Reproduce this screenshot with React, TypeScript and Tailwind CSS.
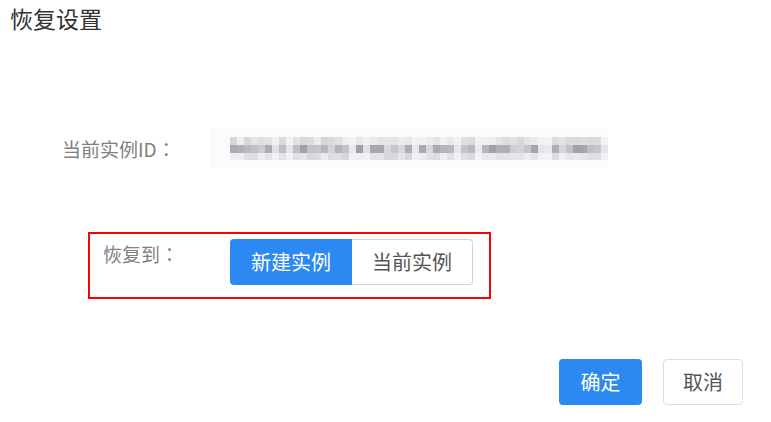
const mosaicCols = 54;

// pseudo-random shades for the masked instance id
const shade = (i: number, row: number) => {
  const n = Math.abs(Math.sin(i * 12.9898 + row * 78.233) * 43758.5453) % 1;
  const gap = i % 9 === 8 || i % 13 === 6;
  if (row === 1) {
    const v = gap ? 222 + n * 15 : 160 + n * 60;
    return `rgb(${v - 3}, ${v}, ${v + 6})`;
  }
  const v = gap ? 242 : 214 + n * 26;
  return `rgb(${v}, ${v}, ${v + 4})`;
};

const MaskedId: React.FC = () => (
  <div className="flex flex-col">
    {[8, 8, 7].map((h, row) => (
      <div key={row} className="flex">
        {Array.from({ length: mosaicCols }).map((_, i) => (
          <div
            key={i}
            className="w-[7px]"
            style={{ height: h, backgroundColor: shade(i, row) }}
          />
        ))}
      </div>
    ))}
  </div>
);

const Colon: React.FC = () => (
  <span style={{ fontFamily: '"Noto Sans CJK JP", sans-serif' }}>：</span>
);

export default function App() {
  return (
    <div
      className="w-[771px] h-[422px] bg-white overflow-hidden"
      style={{ fontFamily: '"Noto Sans CJK SC", "Liberation Sans", sans-serif' }}
    >
      {/* Title */}
      <div className="pt-[7px] pl-[10px] text-[23px] leading-[23px] text-[#333]">
        恢复设置
      </div>

      {/* Current instance */}
      <div className="mt-[98px] flex items-center h-[40px] pl-[62px]">
        <span className="w-[148px] text-[19px] leading-[19px] text-[#808080]">
          当前实例ID
          <Colon />
        </span>
        <div className="w-[397px] h-[40px] bg-[#fbfbfb] flex items-center pl-[20px]">
          <MaskedId />
        </div>
      </div>

      {/* Restore target */}
      <div className="mt-[64px] ml-[88px] w-[403px] h-[67px] border-2 border-[#ff0000] flex pl-[13px]">
        <span className="mt-[10px] w-[127px] text-[19px] leading-[19px] text-[#808080]">
          恢复到
          <Colon />
        </span>
        <div className="mt-[5px] flex h-[46px]">
          <button className="w-[122px] h-full bg-[#2b89f1] text-white text-[20px] rounded-l-[4px]">
            新建实例
          </button>
          <button className="w-[121px] h-full bg-white border border-l-0 border-[#d0d3d9] text-[#555] text-[20px] rounded-r-[4px]">
            当前实例
          </button>
        </div>
      </div>

      {/* Footer */}
      <div className="mt-[60px] flex justify-end gap-[21px] pr-[28px]">
        <button className="w-[83px] h-[46px] bg-[#2b89f1] text-white text-[20px] rounded-[4px]">
          确定
        </button>
        <button className="w-[80px] h-[46px] bg-white border border-[#dcdee2] text-[#555] text-[20px] rounded-[4px]">
          取消
        </button>
      </div>
    </div>
  );
}
